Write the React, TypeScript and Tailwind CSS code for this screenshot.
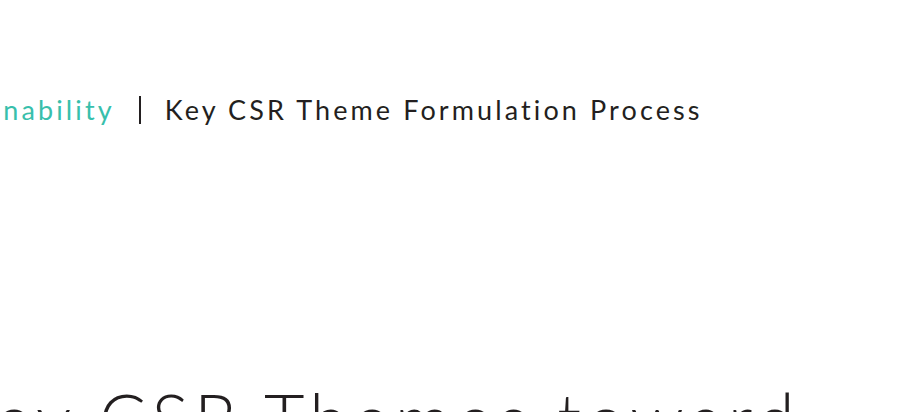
export default function App() {
  return (
    <div className="min-h-[412px] w-full overflow-hidden bg-white font-['Lato',sans-serif]">
      <div className="-ml-[86px] pt-[94px]">
        <nav className="flex items-center gap-[24px] whitespace-nowrap text-[27px] leading-[32px] tracking-[0.115em]">
          <a className="text-[#38bfac]">Sustainability</a>
          <span className="h-[28px] w-[2px] bg-[#231f20]" />
          <span className="text-[#231f20]">Key CSR Theme Formulation Process</span>
        </nav>
        <h1 className="mt-[257px] whitespace-nowrap pl-[34px] text-[70px] font-light leading-none tracking-[0.075em] text-[#231f20]">
          Key CSR Themes toward
        </h1>
      </div>
    </div>
  );
}
